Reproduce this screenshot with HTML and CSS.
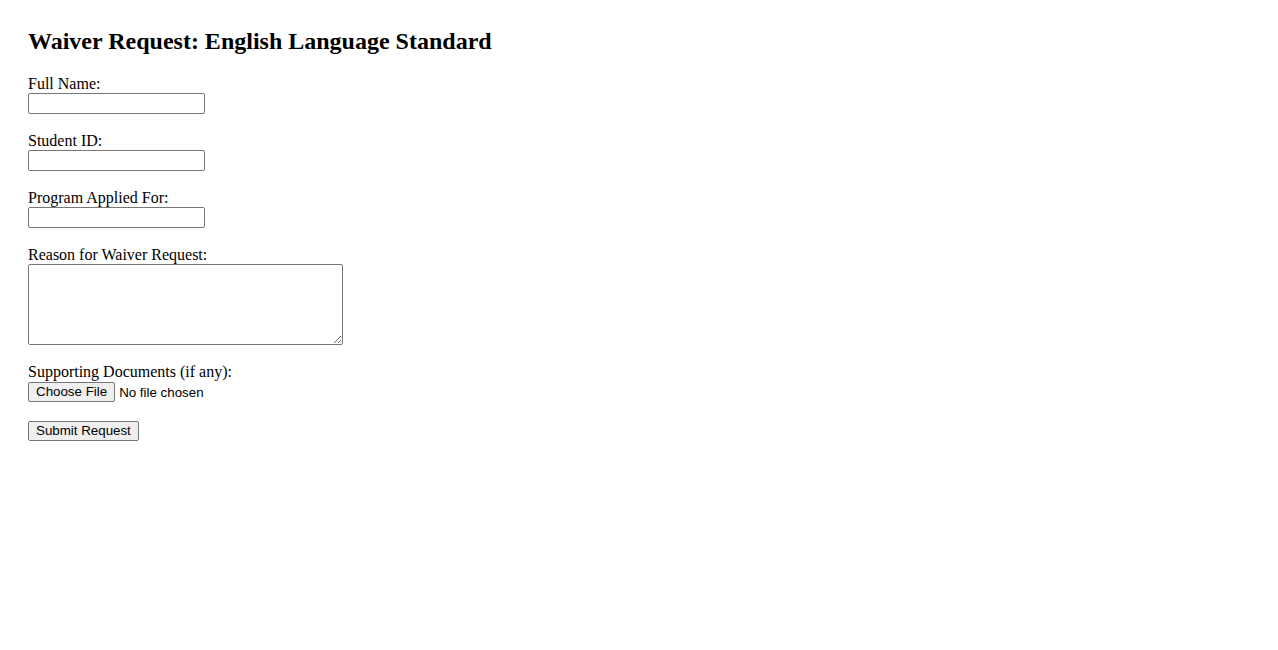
FILE: index.html
```html
<!DOCTYPE html>
<html lang="en">
<head>
<meta charset="utf-8">
<title>Waiver Request</title>
<link rel="stylesheet" href="styles.css">
</head>
<body>
<h2 class="title">Waiver Request: English Language Standard</h2>
<form class="form">
  <div class="group">
    <label class="label" for="name">Full Name:</label>
    <input class="field" type="text" id="name">
  </div>
  <div class="group">
    <label class="label" for="sid">Student ID:</label>
    <input class="field" type="text" id="sid">
  </div>
  <div class="group">
    <label class="label" for="prog">Program Applied For:</label>
    <input class="field" type="text" id="prog">
  </div>
  <div class="group">
    <label class="label" for="reason">Reason for Waiver Request:</label>
    <textarea class="area" id="reason"></textarea>
  </div>
  <div class="group group-file">
    <label class="label" for="docs">Supporting Documents (if any):</label>
    <div class="file-row"><span class="btn">Choose File</span><span class="file-text">No file chosen</span></div>
  </div>
  <div class="group">
    <button class="btn" type="button">Submit Request</button>
  </div>
</form>
</body>
</html>
```
FILE: styles.css
```css
body {
  margin: 0;
  padding: 28px;
  font-family: "Liberation Serif", "Times New Roman", serif;
  font-size: 16px;
  color: #000;
  background: #fff;
}
.title {
  margin: 0 0 20px 0;
  font-size: 24px;
  font-weight: bold;
  line-height: 27px;
}
.form { margin: 0; }
.group { margin-bottom: 18px; }
.group-file { margin-bottom: 19px; }
.label {
  display: block;
  line-height: 18px;
}
.field {
  display: block;
  box-sizing: border-box;
  width: 177px;
  height: 21px;
  margin: 0;
  border: 1px solid #767676;
  border-radius: 2px;
  padding: 1px 2px;
  font-family: "Liberation Sans", Arial, sans-serif;
  font-size: 13.33px;
}
.area {
  display: block;
  box-sizing: border-box;
  width: 315px;
  height: 81px;
  margin: 0;
  border: 1px solid #767676;
  border-radius: 2px;
  padding: 2px;
  font-family: "Liberation Mono", monospace;
  font-size: 13.33px;
  resize: both;
}
.file-row {
  display: flex;
  align-items: center;
  gap: 4px;
  padding-top: 1px;
}
.btn {
  display: inline-flex;
  align-items: center;
  box-sizing: border-box;
  height: 20px;
  margin: 0;
  padding: 0 7px;
  border: 1px solid #767676;
  border-radius: 2px;
  background: #efefef;
  color: #000;
  font-family: "Liberation Sans", Arial, sans-serif;
  font-size: 13.33px;
  line-height: 16px;
}
.file-text {
  font-family: "Liberation Sans", Arial, sans-serif;
  font-size: 13.33px;
}
```
